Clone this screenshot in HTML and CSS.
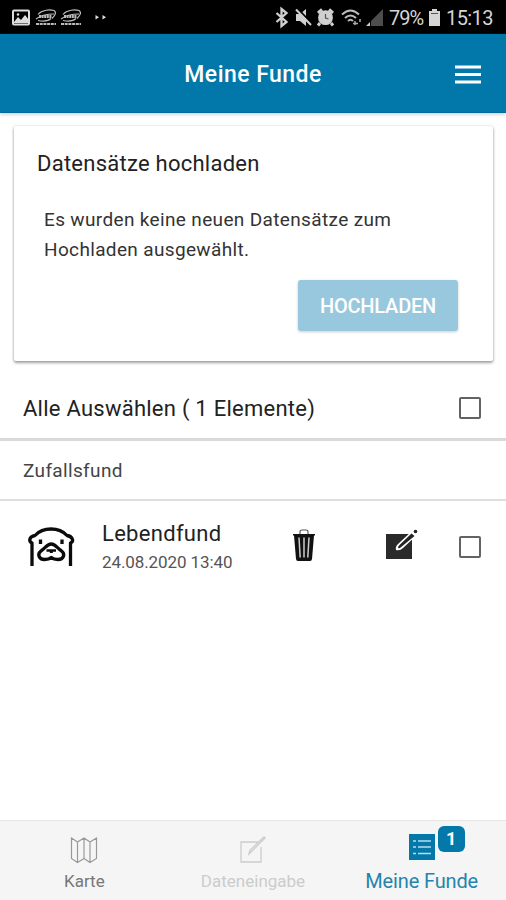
FILE: index.html
```html
<!DOCTYPE html>
<html lang="de">
<head>
<meta charset="utf-8">
<title>Meine Funde</title>
<link rel="stylesheet" href="styles.css">
</head>
<body>
<div class="status">
  <svg class="status-left" width="110" height="34" viewBox="0 0 110 34">
    <rect x="13" y="10.500" width="16" height="14" rx="1" fill="none" stroke="#ddd" stroke-width="2"/>
    <path d="M14 22l4-5 3 3 4-5 4 5v3H14z" fill="#ddd"/><circle cx="18" cy="14.500" r="1.300" fill="#ddd"/>
    <g id="car" fill="none" stroke="#bbb" stroke-width="1.200"><path d="M38 14.500c4-5 12-5 16-4 3 2 1 5-2 8M36 19c5-4 12-5 18-5M38 20.500c5 1 10 1 13-2"/><path d="M39 16.500h13" stroke-width="3" stroke-dasharray="2 .6"/><path d="M36 24h20" stroke-width="2" stroke-dasharray="3 .7"/></g>
    <use href="#car" x="25"/>
    <path d="M95.500 15l3.500 2.200-3.500 2.200zM102.500 15l3.500 2.200-3.500 2.200z" fill="#ddd"/>
  </svg>
  <div class="status-right">
    <svg width="108" height="34" viewBox="275 0 108 34">
      <path d="M276.500 13l10 9-5 4V9l5 4-10 9" fill="none" stroke="#d0d0d0" stroke-width="2.300"/>
      <path d="M296 14h4l6-5v17l-6-5h-4z" fill="#d0d0d0"/><path d="M297 8l15 16" stroke="#000" stroke-width="2"/><path d="M296 9.500l15 15.500" stroke="#d0d0d0" stroke-width="2"/>
      <circle cx="325.500" cy="17.700" r="7.400" fill="#d0d0d0"/><path d="M318 13l4-3.500M333 13l-4-3.500M320 23l-2 2.500M331 23l2 2.500" stroke="#d0d0d0" stroke-width="3"/><path d="M325.500 14v4l3 1" fill="none" stroke="#555" stroke-width="1.200"/>
      <path d="M342 14.500q8.500-8 17 0M345 18q5.500-5 11 0M348 21q2.500-2.500 5 0" fill="none" stroke="#bbb" stroke-width="2"/><path d="M353 23.500h5M355 21v4M360 19v3" stroke="#aaa" stroke-width="1.500"/>
      <path d="M383 9v17h-12V21z" fill="#4d4d4d"/><path d="M366 26l4-4v4z" fill="#ccc"/>
    </svg>
    <span class="percent">79%</span>
    <svg width="13" height="34" viewBox="0 0 13 34"><path d="M4 9h5v2h3v15H1V11h3z" fill="#d5d5d5"/><path d="M3 13.500h7" stroke="#555"/></svg>
    <span class="clock">15:13</span>
  </div>
</div>
<header class="header">
  <h1 class="header-title">Meine Funde</h1>
  <svg class="menu" width="26" height="19" viewBox="0 0 26 19"><path d="M0 2h26M0 9.500h26M0 17h26" stroke="#fff" stroke-width="3"/></svg>
</header>
<main class="content">
  <section class="card">
    <h2 class="card-title">Datensätze hochladen</h2>
    <p class="card-text">Es wurden keine neuen Datensätze zum<br>Hochladen ausgewählt.</p>
    <button class="upload">HOCHLADEN</button>
  </section>
  <div class="select-all"><span>Alle Auswählen ( 1 Elemente)</span><span class="check"></span></div>
  <div class="group">Zufallsfund</div>
  <div class="item">
    <svg class="otter" width="48" height="42" viewBox="0 0 48 42" fill="none" stroke="#0b0b0b" stroke-width="3.300" stroke-linejoin="round">
      <path d="M5 40V17C1.500 15.500 2 10.500 8 9.500Q14 3 24 3T40 9.500C46 10.500 47 15.500 43.500 17V40"/>
      <path d="M13.500 13.500v4.500M35 13.500v4.500"/>
      <path d="M24.300 18C20 18 18.500 22 14.500 24.500C9.500 28 12 33.500 17.500 33.500Q22 33.500 24.300 31.500Q26.600 33.500 31 33.500C36.500 33.500 39 28 34 24.500C30 22 28.500 18 24.300 18Z"/>
      <path d="M19.500 24.500h9.500" stroke-width="2.500"/><path d="M24.300 25v2" stroke-width="3"/>
    </svg>
    <div class="item-text"><div class="item-name">Lebendfund</div><div class="item-date">24.08.2020 13:40</div></div>
    <svg class="trash" width="24" height="34" viewBox="0 0 24 34">
      <path d="M8 5V2.500Q8 1 10 1h4q2 0 2 1.500V5" fill="none" stroke="#555" stroke-width="1.200"/>
      <path d="M1 5h22v1.500h-1L20 30q-.2 2-2 2H6q-1.800 0-2-2L2 6.500H1z" fill="#111"/>
      <path d="M7 8.500l1.200 20M12 8.500v20M17 8.500l-1.200 20" stroke="#ccc" stroke-width="1.500"/>
    </svg>
    <svg class="edit" width="34" height="34" viewBox="0 0 34 34">
      <path d="M1 6h26v25H1z" fill="#2a2a2a"/>
      <path d="M27 3L13 16q-3 3-2 6 4 1 7-2L32 7z" fill="#fff"/>
      <path d="M26.500 5.500L14.500 17q-2 2-1.300 3 1 .7 3-1L29.500 8z" fill="#222"/><circle cx="30.500" cy="3.500" r="1.800" fill="#222"/>
    </svg>
    <span class="check"></span>
  </div>
</main>
<nav class="tabs">
  <div class="tab">
    <svg width="28" height="28" viewBox="0 0 28 28" fill="none" stroke="#999" stroke-width="1.200"><path d="M1.500 2L7.500 6 14 2l6 4 6.500-4v20.500L20 26.500l-6-4-6.500 4-6-4zM7.500 6v20M14 2v20M20 6v20"/></svg>
    <span class="tab-label">Karte</span>
  </div>
  <div class="tab disabled">
    <svg width="28" height="28" viewBox="0 0 28 28" fill="none" stroke="#ccc" stroke-width="1.300"><path d="M19 6H2v20h20V11M26 2L12 16l-2 2 .7-3.500L25 1z"/></svg>
    <span class="tab-label">Dateneingabe</span>
  </div>
  <div class="tab active">
    <span class="list-icon"><svg width="26" height="26" viewBox="0 0 26 26"><path d="M0 0h26v26H0z" fill="#0578aa"/><path d="M4 7h3M4 13h3M4 19.500h3M9 7h13M9 13h13M9 19.500h13" stroke="#b9dcec" stroke-width="1.600"/></svg><span class="badge">1</span></span>
    <span class="tab-label">Meine Funde</span>
  </div>
</nav>
</body>
</html>
```
FILE: styles.css
```css
* { box-sizing: border-box; }
body { margin: 0; width: 506px; height: 900px; display: flex; flex-direction: column; overflow: hidden; background: #fff; color: #222; font-family: Roboto, "Liberation Sans", sans-serif; }
svg { display: block; flex: none; }
h1, h2, p { margin: 0; font-weight: 400; }
.status { height: 34px; background: #000; color: #d5d5d5; display: flex; justify-content: space-between; }
.status-right { display: flex; align-items: center; width: 231px; font-size: 20px; line-height: 34px; white-space: nowrap; }
.percent { width: 35px; margin: 2px 4px 0 6px; letter-spacing: -1px; }
.clock { margin: 2px 0 0 5px; letter-spacing: -0.6px; }
.header { height: 79px; flex: none; background: #0277aa; border-bottom: 1px solid #026b9a; color: #fff; display: grid; grid-template-columns: 1fr auto 1fr; align-items: center; padding: 2px 25px 0; box-shadow: 0 2px 3px #d5d9e3; }
.header-title { grid-column: 2; font-size: 23px; font-weight: 500; letter-spacing: 0.45px; padding-top: 1px; }
.menu { justify-self: end; }
.content { flex: 1; display: flex; flex-direction: column; }
.card { margin: 13px 13px 0 14px; height: 235px; padding: 24px 35px 0 23px; border-radius: 2px; background: #fff; box-shadow: 0 2px 3px rgba(0,0,0,.35), 0 0 3px rgba(0,0,0,.16); display: flex; flex-direction: column; }
.card-title { font-size: 22px; line-height: 28px; letter-spacing: 0.25px; }
.card-text { margin: 27px 0 0 7px; font-size: 19px; line-height: 30px; letter-spacing: 0.35px; color: #333; }
.upload { align-self: flex-end; width: 160px; height: 51px; margin-top: 15px; padding: 0; border: 0; border-radius: 3px; background: #98c8dd; color: #fff; font: 500 20px Roboto, sans-serif; letter-spacing: -0.2px; box-shadow: 0 1px 3px rgba(0,0,0,.2); }
.select-all { margin-top: 17px; height: 63px; padding: 0 25px 0 23px; display: flex; align-items: center; justify-content: space-between; border-bottom: 3px solid #d9d9d9; font-size: 22px; letter-spacing: 0.25px; }
.check { width: 22px; height: 22px; border: 2px solid #636363; border-radius: 2px; flex: none; }
.group { height: 60px; padding: 0 23px; display: flex; align-items: center; border-bottom: 2px solid #dedede; font-size: 19px; color: #444; letter-spacing: 0.35px; }
.item { height: 92px; padding: 0 25px 0 27px; display: flex; align-items: center; }
.item-text { width: 160px; margin: 1px 0 0 27px; }
.item-name { font-size: 22px; line-height: 28px; letter-spacing: 0.3px; }
.item-date { font-size: 17px; line-height: 28px; color: #555; letter-spacing: -0.1px; }
.trash { margin: -3px 0 0 30px; }
.edit { margin: -4px 0 0 69px; }
.item .check { margin-left: auto; }
.tabs { height: 80px; flex: none; border-top: 1px solid #e6e6e6; background: #f5f5f5; display: grid; grid-template-columns: repeat(3, 1fr); color: #777; }
.tab { display: flex; flex-direction: column; align-items: center; padding-top: 15px; }
.tab-label { margin-top: 5px; font-size: 17px; line-height: 25px; }
.disabled { color: #ccc; }
.active { color: #2484ad; padding-top: 13px; }
.active .tab-label { font-size: 20px; margin-top: 9px; letter-spacing: -0.15px; }
.list-icon { position: relative; }
.badge { position: absolute; left: 29px; top: -8px; width: 27px; height: 26px; border-radius: 6px; background: #0578aa; color: #fff; font-size: 18px; font-weight: 700; line-height: 26px; text-align: center; }
```
